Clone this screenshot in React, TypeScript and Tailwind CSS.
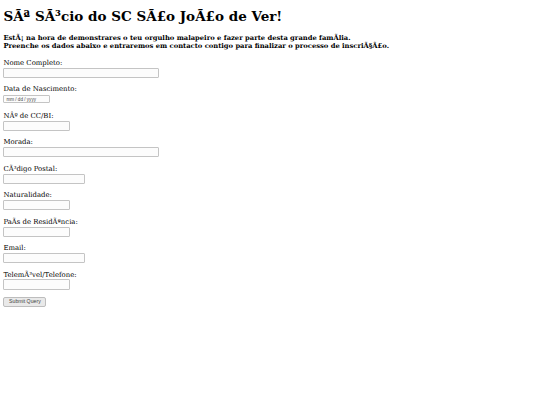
import React from 'react';

const fields: { label: string; w: string; date?: boolean }[] = [
    { label: 'Nome Completo:', w: 'w-[156px]' },
    { label: 'Data de Nascimento:', w: 'w-[47px]', date: true },
    { label: 'NÂº de CC/BI:', w: 'w-[67px]' },
    { label: 'Morada:', w: 'w-[156px]' },
    { label: 'CÃ³digo Postal:', w: 'w-[82px]' },
    { label: 'Naturalidade:', w: 'w-[67px]' },
    { label: 'PaÃ\u00ADs de ResidÃªncia:', w: 'w-[67px]' },
    { label: 'Email:', w: 'w-[82px]' },
    { label: 'TelemÃ³vel/Telefone:', w: 'w-[67px]' },
];

const App: React.FC = () => {
    return (
        <div className="min-h-[405px] bg-white px-[3.4px] text-black font-['DejaVu_Serif',serif]">
            <h1 className="pt-[9px] text-[13.5px] font-bold leading-[15.7px]">SÃª SÃ³cio do SC SÃ£o JoÃ£o de Ver!</h1>

            <p className="mt-[10px] text-[6.75px] font-bold leading-[7.86px]">
                EstÃ¡ na hora de demonstrares o teu orgulho malapeiro e fazer parte desta grande famÃ{'\u00AD'}lia.
                <br />
                Preenche os dados abaixo e entraremos em contacto contigo para finalizar o processo de inscriÃ§Ã£o.
            </p>

            <form className="mt-[9.5px] flex flex-col" onSubmit={e => e.preventDefault()}>
                {fields.map(f => (
                    <div key={f.label} className="flex flex-col mb-[8.3px]">
                        <label className="text-[6.9px] leading-[7.86px]">{f.label}</label>
                        <div className="h-[10.3px] flex items-start">
                            {f.date ? (
                                <input
                                    type="text"
                                    placeholder="mm / dd / yyyy"
                                    className={`${f.w} h-[8.6px] mt-[0.5px] border border-[#c4c4c4] bg-[#fcfcfc] rounded-[1px] px-[2px] text-[4.6px] font-['Liberation_Sans',sans-serif] placeholder:text-[#444]`}
                                />
                            ) : (
                                <input
                                    type="text"
                                    className={`${f.w} h-[10.3px] border border-[#c4c4c4] bg-[#fcfcfc] rounded-[1px]`}
                                />
                            )}
                        </div>
                    </div>
                ))}
                <div className="flex leading-none">
                    <button
                        type="submit"
                        className="w-[43px] h-[10px] -mt-[1px] border border-[#bdbdbd] bg-[#e9e9e9] rounded-[2px] text-[5.2px] leading-none text-[#444] font-['Liberation_Sans',sans-serif]"
                    >
                        Submit Query
                    </button>
                </div>
            </form>
        </div>
    );
};

export default App;
